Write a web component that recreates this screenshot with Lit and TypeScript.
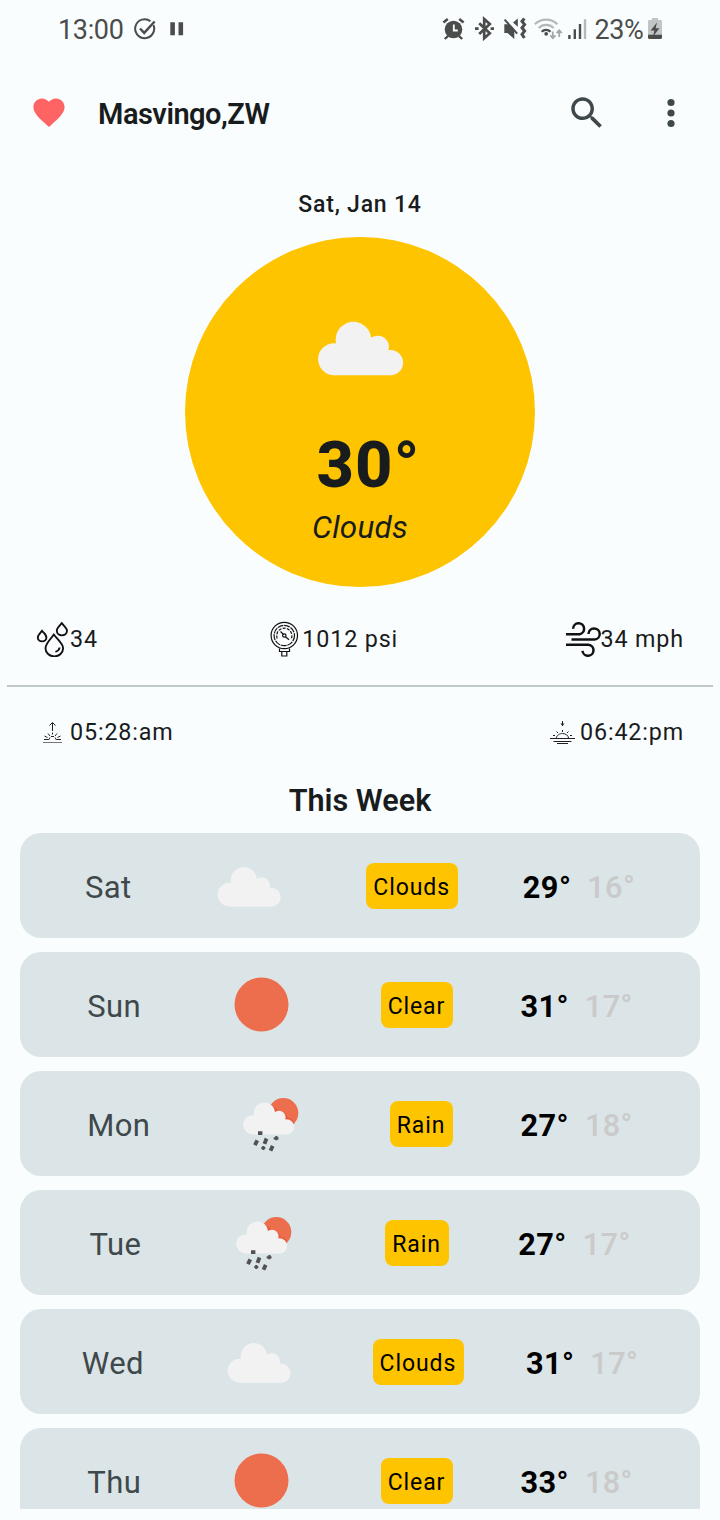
import { LitElement, html, svg, css } from "lit";
import { customElement, property } from "lit/decorators.js";

type Kind = "clouds" | "clear" | "rain";

interface Day {
  name: string;
  kind: Kind;
  label: string;
  high: number;
  low: number;
}

const WEEK: Day[] = [
  { name: "Sat", kind: "clouds", label: "Clouds", high: 29, low: 16 },
  { name: "Sun", kind: "clear", label: "Clear", high: 31, low: 17 },
  { name: "Mon", kind: "rain", label: "Rain", high: 27, low: 18 },
  { name: "Tue", kind: "rain", label: "Rain", high: 27, low: 17 },
  { name: "Wed", kind: "clouds", label: "Clouds", high: 31, low: 17 },
  { name: "Thu", kind: "clear", label: "Clear", high: 33, low: 18 },
];

const cloud = svg`
  <g fill="#f2f2f2">
    <circle cx="-26.3" cy="10.5" r="16"></circle>
    <circle cx="-7" cy="-9" r="17.8"></circle>
    <circle cx="17.3" cy="-1.8" r="11.2"></circle>
    <circle cx="30" cy="14" r="12.7"></circle>
    <path d="M-26 0L-20 -10L15 -10L24 4L30 26.6H-26z"></path>
  </g>`;

@customElement("weather-icon")
export class WeatherIcon extends LitElement {
  @property() kind: Kind = "clouds";

  static styles = css`
    :host { display: block; }
    svg { display: block; width: 100%; height: 100%; }
  `;

  private shape() {
    switch (this.kind) {
      case "clear":
        return svg`<circle cx="1" cy="0" r="27" fill="#ec6e4c"></circle>`;
      case "rain":
        return svg`
          <circle cx="12.8" cy="-10.5" r="15" fill="#ec6e4c"></circle>
          <path d="M1 -17q5 1 7 5q7 0 9 6q5 1 7 5.5l-3 3l-20 -4z" fill="#ea5a36"></path>
          <g transform="translate(-2 -5) scale(.6)">${cloud}</g>
          <g stroke="#505055" stroke-width="3.8">
            <path d="M-12.5 9.6h4.4M-13.2 16.8l-2.4 4.8M-4 15l-2 5.4M2.2 22.4l-2.2 4.8"></path>
            <path d="M3.2 14.8h4.8M5.9 12.4v4.4M-9.2 24.5h4M-7.2 22.5v4" stroke-width="2.2"></path>
          </g>`;
      default:
        return svg`<g transform="translate(0.5 1.4) scale(.742)">${cloud}</g>`;
    }
  }

  render() {
    return html`<svg viewBox="-52.5 -52.5 105 105">${this.shape()}</svg>`;
  }
}

@customElement("status-bar")
export class StatusBar extends LitElement {
  static styles = css`
    :host {
      display: flex;
      justify-content: space-between;
      align-items: center;
      height: 58px;
      padding: 0 57px 0 58px;
      box-sizing: border-box;
      color: #4b4d4c;
      font-size: 27px;
    }
    .side { display: flex; align-items: center; }
    .clock { letter-spacing: -0.35px; margin-right: 9.7px; padding-top: 1px; }
    .charge { margin: 0 3.5px 0 8px; letter-spacing: -0.4px; padding-top: 1px; }
    svg { display: block; }
  `;

  render() {
    return html`
      <div class="side">
        <span class="clock">13:00</span>
        <svg width="60" height="30" viewBox="133 14 60 30" fill="none" stroke="#4b4d4c">
          <path d="M153.5 25.2A9.5 9.5 0 1 1 150.5 21.2" stroke-width="2"></path>
          <path d="M140 28.5l4.2 4.4 10.4-11.4" stroke-width="2.4"></path>
          <path d="M172.6 22.3v13M180.8 22.3v13" stroke-width="4.6"></path>
        </svg>
      </div>
      <div class="side">
        <svg width="146" height="30" viewBox="441 14 146 30" fill="none" stroke="#4b4d4c">
          <circle cx="453.5" cy="29.5" r="8.8" fill="#4b4d4c" stroke="none"></circle>
          <path d="M443.4 22.6l4.4-3.6M463.6 22.6l-4.4-3.6" stroke-width="2.6"></path>
          <path d="M448.2 35.8l-3.4 3.2M458.8 35.8l3.4 3.2" stroke-width="2.4"></path>
          <path d="M453.8 24.5v6h4" stroke="#f9fdfe" stroke-width="1.8"></path>
          <path d="M479.2 23.2l10.6 10-5.6 5V19l5.6 5-10.6 10" stroke-width="2.7"></path>
          <path d="M475 28.6h3.6M490.6 28.6h3.4" stroke-width="2.8"></path>
          <path d="M504.3 24.3h5.2l4.8 4.8v10l-6.8-6h-3.2z" fill="#4b4d4c" stroke="none"></path>
          <path d="M504.6 19.6l12.6 14" stroke-width="2"></path>
          <path d="M517.8 18.6v8.2l-4.8-4.2z" fill="#4b4d4c" stroke="none"></path>
          <path d="M524.4 18.6l-2.4 2.8 2.6 3.2-2.6 3.2 2.6 3.2-2.6 3.4 2.4 3.6" stroke-width="3"></path>
          <path d="M534.8 24.2a16 16 0 0 1 22.6 0M538.6 28a10.8 10.8 0 0 1 15 0" stroke="#b5b8b8" stroke-width="2.2"></path>
          <path d="M541.6 31.8a6.4 6.4 0 0 1 9 0" stroke-width="2.2"></path>
          <circle cx="546.2" cy="33.8" r="1.9" fill="#4b4d4c" stroke="none"></circle>
          <path d="M552.8 31.4v6.6M550.2 35.4l2.6 2.8 2.6-2.8M559.2 37v-6.4M556.6 33.2l2.6-2.8 2.6 2.8" stroke="#a4a8a8" stroke-width="1.8"></path>
          <path d="M569.4 35v4M574.8 29.2v9.8M580 24v15" stroke-width="2.4"></path>
          <path d="M585 19.2V39" stroke="#b5b8b8" stroke-width="2.4"></path>
        </svg>
        <span class="charge">23%</span>
        <svg width="16" height="30" viewBox="647 14 16 30">
          <path d="M652 18h6v2h2.6q1.4 0 1.4 1.4V37.6q0 1.4-1.4 1.4H649.4q-1.4 0-1.4-1.4V21.4q0-1.4 1.4-1.4H652z" fill="#c2c5c5"></path>
          <path d="M648 34.8h14v2.8q0 1.4-1.4 1.4H649.4q-1.4 0-1.4-1.4z" fill="#4b4d4c"></path>
          <path d="M657 22.4l-6.4 8.2h3.8l-1.4 6 6.4-8.4h-3.8z" fill="#4b4d4c"></path>
        </svg>
      </div>
    `;
  }
}

@customElement("day-card")
export class DayCard extends LitElement {
  @property({ attribute: false }) day!: Day;

  static styles = css`
    :host {
      display: flex;
      justify-content: space-evenly;
      align-items: center;
      flex: none;
      height: 105px;
      border-radius: 21px;
      background: #dbe4e6;
    }
    .name { color: #3f484a; font-size: 31px; letter-spacing: 0.4px; padding-top: 3px; }
    .icon { width: 105px; height: 105px; flex: none; }
    .pill {
      height: 46px;
      line-height: 50px;
      padding: 0 8px 0 7px;
      border-radius: 8px;
      background: #ffc400;
      color: #000;
      font-size: 23px;
      letter-spacing: 0.9px;
    }
    .temps { display: flex; gap: 16px; font-size: 30.7px; font-weight: 700; letter-spacing: 0.4px; padding-top: 3px; }
    .high { color: #000; }
    .low { color: #cacaca; font-weight: 500; }
  `;

  render() {
    const d = this.day;
    return html`
      <span class="name">${d.name}</span>
      <weather-icon class="icon" .kind=${d.kind}></weather-icon>
      <span class="pill">${d.label}</span>
      <span class="temps"><span class="high">${d.high}°</span><span class="low">${d.low}°</span></span>
    `;
  }
}

@customElement("app-root")
export class AppRoot extends LitElement {
  static styles = css`
    :host {
      display: flex;
      flex-direction: column;
      height: 1520px;
      overflow: hidden;
      background: #fafdfe;
      color: #191c1d;
      font-family: Roboto, sans-serif;
    }
    svg { display: block; flex: none; }
    .bar { display: flex; align-items: center; height: 110px; padding: 0 28px 0 28px; flex: none; }
    .place { flex: 1; margin-left: 28px; font-size: 29px; font-weight: 600; letter-spacing: -0.5px; padding-top: 2px; }
    .dots { margin-left: 42px; }
    .date { text-align: center; font-size: 23px; font-weight: 500; letter-spacing: 0.8px; line-height: 30px; margin-top: 22px; }
    .disc {
      display: flex;
      flex-direction: column;
      align-items: center;
      flex: none;
      align-self: center;
      width: 350px;
      height: 350px;
      margin-top: 17px;
      border-radius: 50%;
      background: #ffc400;
    }
    .sky { width: 141.5px; height: 141.5px; margin-top: 39px; }
    .now { font-size: 65px; font-weight: 800; letter-spacing: 1.2px; line-height: 70px; margin-top: 12px; padding-left: 17px; }
    .state { font-size: 31.5px; font-style: italic; letter-spacing: 0.2px; line-height: 36px; margin-top: 10px; }
    .facts { display: flex; justify-content: space-between; align-items: center; flex: none; padding: 0 36px; }
    .metrics { height: 98px; box-sizing: border-box; margin-top: 3px; }
    .times { height: 90px; }
    .fact { display: flex; align-items: center; font-size: 23.3px; letter-spacing: 0.85px; }
    .pressure { padding-left: 6px; }
    .rule { height: 2px; margin: -3px 7px 0; background: #bfc8ca; flex: none; }
    .week { text-align: center; font-size: 30.6px; font-weight: 600; line-height: 36px; margin-top: 6px; }
    .list { display: flex; flex-direction: column; gap: 14px; height: 676px; margin: 14px 20px 0; overflow: hidden; flex: none; }
  `;

  render() {
    return html`
      <status-bar></status-bar>
      <div class="bar">
        <svg width="42" height="42" viewBox="0 0 24 24" fill="#ff6464">
          <path d="M12 21.35l-1.45-1.32C5.4 15.36 2 12.28 2 8.5 2 5.42 4.42 3 7.5 3c1.74 0 3.41.81 4.5 2.09C13.09 3.81 14.76 3 16.5 3 19.58 3 22 5.42 22 8.5c0 3.78-3.4 6.86-8.55 11.54L12 21.35z" transform="translate(1.3 1) scale(.89)"></path>
        </svg>
        <div class="place">Masvingo,ZW</div>
        <svg width="42" height="42" viewBox="0 0 24 24" fill="#3f484a">
          <path d="M15.5 14h-.79l-.28-.27C15.41 12.59 16 11.11 16 9.5 16 5.91 13.09 3 9.5 3S3 5.91 3 9.5 5.91 16 9.5 16c1.61 0 3.09-.59 4.23-1.57l.27.28v.79l5 4.99L20.49 19l-4.99-5zm-6 0C7.01 14 5 11.99 5 9.5S7.01 5 9.5 5 14 7.01 14 9.5 11.99 14 9.5 14z"></path>
        </svg>
        <svg class="dots" width="42" height="42" viewBox="0 0 24 24" fill="#3f484a">
          <circle cx="12" cy="6" r="2.05"></circle>
          <circle cx="12" cy="12" r="2.05"></circle>
          <circle cx="12" cy="18" r="2.05"></circle>
        </svg>
      </div>
      <div class="date">Sat, Jan 14</div>
      <div class="disc">
        <weather-icon class="sky" .kind=${"clouds"}></weather-icon>
        <div class="now">30°</div>
        <div class="state">Clouds</div>
      </div>
      <div class="facts metrics">
        <div class="fact">
          <svg width="34" height="36" viewBox="36 621 34 36" fill="none" stroke="#111" stroke-width="1.9">
            <path d="M53.8 634.5C50 640 45.5 643.5 45.5 648.2a8.8 8.2 0 0 0 17.6 0C63.1 643.5 58 640 53.8 634.5z"></path>
            <path d="M61.8 623.2C59.5 626 56.8 628.2 56.8 630.6a5 4.7 0 0 0 10.2 0C67 628.2 64 626 61.8 623.2z"></path>
            <path d="M42 630.8C40 633.2 37.8 635 37.8 637.4a4.3 4 0 0 0 8.6 0C46.4 635 44 633.2 42 630.8z"></path>
            <path d="M59.6 647.5q-.4 3.2-4.2 4.3"></path>
          </svg>
          <span>34</span>
        </div>
        <div class="fact pressure">
          <svg width="32" height="36" viewBox="270 621 32 36" fill="none" stroke="#111" stroke-width="1.2">
            <circle cx="284.3" cy="635.5" r="13.2"></circle>
            <circle cx="284.3" cy="635.5" r="10.2" stroke-dasharray="6 .8"></circle>
            <path d="M277.2 638.5a7.6 7.6 0 1 1 14.2 0" stroke-dasharray="3 1.3"></path>
            <circle cx="284.3" cy="635.5" r="1.7"></circle>
            <path d="M280.5 631.5l3 3M285.5 636.7l3.5 3"></path>
            <path d="M279.5 648.5v3h10v-3M281.8 651.5v4.5h5v-4.5"></path>
          </svg>
          <span>1012 psi</span>
        </div>
        <div class="fact">
          <svg width="36" height="36" viewBox="565 621 36 36" fill="none" stroke="#111" stroke-width="2.5">
            <path d="M566 634.2h13.5a5.5 5.5 0 1 0-6.4-5.4"></path>
            <path d="M571.5 639.6h23a5.6 5.6 0 1 0-6-5.6"></path>
            <path d="M566 644.8h22.5a5.5 5.5 0 1 1-6 6"></path>
          </svg>
          <span>34 mph</span>
        </div>
      </div>
      <div class="rule"></div>
      <div class="facts times">
        <div class="fact">
          <svg width="34" height="30" viewBox="36 717 34 30" fill="none" stroke="#222" stroke-width="1">
            <path d="M52.5 731v-8M49.5 725.5l3-3 3 3"></path>
            <path d="M52.5 732.5v2M48 733.5l2 2.5M57 733.5l-2 2.5M44.5 736l3 1.5M60.5 736l-3 1.5M44 739.5h4.5M56.5 739.5h4.5M48.5 740l1.5-2.5M56.5 740l-1.5-2.5M51 736.5h3"></path>
            <path d="M43 742.5h19" stroke="#777"></path>
          </svg>
          <span>05:28:am</span>
        </div>
        <div class="fact">
          <svg width="30" height="30" viewBox="550 717 30 30" fill="none" stroke="#222" stroke-width="1">
            <path d="M562.5 721v5"></path>
            <path d="M560.5 723.5h4l-2 2.5z" fill="#222" stroke="none"></path>
            <path d="M562.5 730v2M556.5 731.5l1.5 1.5M568.5 731.5l-1.5 1.5M553 735.5h2M570 735.5h2"></path>
            <path d="M556.5 738c0-2.5 3-4.5 6-4.5s6 2 6 4.5"></path>
            <path d="M550 738.5h25M553.5 741.5h18M557 743.5h11"></path>
          </svg>
          <span>06:42:pm</span>
        </div>
      </div>
      <div class="week">This Week</div>
      <div class="list">
        ${WEEK.map((d) => html`<day-card .day=${d}></day-card>`)}
      </div>
    `;
  }
}
